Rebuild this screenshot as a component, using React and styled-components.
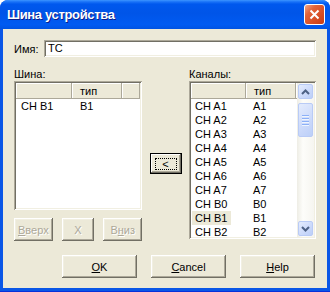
import React from 'react';
import styled, { createGlobalStyle } from 'styled-components';

// --- estilos ---

const GlobalStyle = createGlobalStyle`
  html, body { margin: 0; padding: 0; background: #ffffff; }
  body {
    font-family: "Liberation Sans", Arial, sans-serif;
    font-size: 11px;
    color: #000;
  }
`;

const Window = styled.div`
  width: 330px;
  height: 292px;
  box-sizing: border-box;
  display: flex;
  flex-direction: column;
  background: #0a56e6;
  border-radius: 8px 8px 0 0;
  border-bottom: 1px solid #0831d9;
  overflow: hidden;
`;

const TitleBar = styled.div`
  height: 29px;
  flex: none;
  display: flex;
  align-items: center;
  padding: 0 5px 0 7px;
  box-sizing: border-box;
  background: linear-gradient(180deg, #3d95ff 0%, #1b74f8 6%, #0058ee 14%, #0055e8 45%, #005bf2 85%, #0053e2 100%);
`;

const Title = styled.span`
  font-family: "Liberation Sans", Arial, sans-serif;
  font-weight: bold;
  font-size: 13px;
  color: #fff;
  text-shadow: 1px 1px #0f1f8a;
  letter-spacing: -0.35px;
`;

const CloseButton = styled.div`
  width: 21px;
  height: 21px;
  margin-left: auto;
  box-sizing: border-box;
  border: 1px solid #fff;
  border-radius: 3px;
  background: linear-gradient(135deg, #f4a888 0%, #e2643a 30%, #d64b22 70%, #c43c15 100%);
  display: flex;
  align-items: center;
  justify-content: center;
`;

const Body = styled.div`
  flex: 1;
  margin: 0 3px 3px;
  background: #ece9d8;
  padding: 11px 0 0 11px;
  display: flex;
  flex-direction: column;
`;

const FieldRow = styled.div`
  display: flex;
  align-items: center;
  height: 17px;
`;

const FieldLabel = styled.span`
  width: 30px;
`;

const sunken = `
  box-shadow: inset 1px 1px #aca899, inset -1px -1px #ffffff,
    inset 2px 2px #716f64, inset -2px -2px #f1efe2;
`;

const TextInput = styled.div`
  width: 272px;
  height: 17px;
  box-sizing: border-box;
  background: #fff;
  padding-left: 4px;
  line-height: 17px;
  ${sunken}
`;

const Panes = styled.div`
  display: grid;
  grid-template-columns: 128px 47px 127px;
  margin-top: 11px;
`;

const Column = styled.div`
  display: flex;
  flex-direction: column;
`;

const PaneLabel = styled.div`
  height: 13px;
  line-height: 13px;
`;

const ListBox = styled.div`
  height: ${(p) => p.$h}px;
  box-sizing: border-box;
  background: #fff;
  padding: 2px;
  display: flex;
  overflow: hidden;
  ${sunken}
`;

const ListContent = styled.div`
  flex: 1;
  min-width: 0;
  display: flex;
  flex-direction: column;
  overflow: hidden;
`;

const Header = styled.div`
  display: flex;
  height: 16px;
  flex: none;
`;

const HeaderCell = styled.div`
  width: ${(p) => (p.$w ? `${p.$w}px` : 'auto')};
  flex: ${(p) => (p.$w ? 'none' : '1')};
  box-sizing: border-box;
  background: #ece9d8;
  line-height: 16px;
  padding-left: 8px;
  box-shadow: inset -1px -1px #aca899, inset 1px 1px #ffffff;
`;

const Row = styled.div`
  display: flex;
  height: 14px;
  line-height: 14px;
  flex: none;
  white-space: nowrap;
`;

const Cell = styled.div`
  width: ${(p) => p.$w}px;
  flex: none;
  box-sizing: border-box;
  padding-left: ${(p) => p.$pad}px;
`;

const ItemName = styled.span`
  display: inline-block;
  width: 39px;
  box-sizing: border-box;
  padding-left: 3px;
  margin-left: 1px;
  background: ${(p) => (p.$selected ? '#ece9d8' : 'transparent')};
`;

const Scrollbar = styled.div`
  width: 17px;
  flex: none;
  display: flex;
  flex-direction: column;
  align-items: center;
  padding: 1px 0;
  box-sizing: border-box;
  background: linear-gradient(90deg, #eeede5 0%, #fdfdfa 35%, #f6f5f0 100%);
`;

const ScrollPart = styled.div`
  width: 15px;
  height: ${(p) => p.$h || 15}px;
  margin-top: ${(p) => p.$mt || 0}px;
  box-sizing: border-box;
  border: 1px solid #b9cbf6;
  border-radius: 2px;
  background: linear-gradient(135deg, #e4ecfd 0%, #cfdcfb 50%, #bccff8 100%);
  display: flex;
  flex-direction: column;
  align-items: center;
  justify-content: center;
  gap: 1px;
`;

const Grip = styled.div`
  width: 7px;
  height: 1px;
  background: #8cb0f8;
  box-shadow: 0 1px #eef4fe;
  margin-bottom: 1px;
`;

const Spacer = styled.div`
  flex: 1;
`;

const Middle = styled.div`
  display: flex;
  justify-content: center;
  padding-top: 85px;
`;

const ButtonRow = styled.div`
  display: flex;
  gap: ${(p) => p.$gap}px;
  margin-top: ${(p) => p.$mt}px;
  padding-left: ${(p) => p.$pl || 0}px;
`;

const Button = styled.div`
  width: ${(p) => p.$w}px;
  height: 23px;
  box-sizing: border-box;
  display: flex;
  align-items: center;
  justify-content: center;
  background: #ece9d8;
  color: ${(p) => (p.$disabled ? '#aca899' : '#000')};
  text-shadow: ${(p) => (p.$disabled ? '1px 1px #ffffff' : 'none')};
  box-shadow: inset -1px -1px #716f64, inset 1px 1px #ffffff,
    inset -2px -2px #aca899, inset 2px 2px #f1efe2;
`;

const DefaultButton = styled.div`
  width: 32px;
  height: 21px;
  box-sizing: border-box;
  display: flex;
  padding: 4px 4px 3px 4px;
  border: 1px solid #000;
  background: #ece9d8;
  box-shadow: inset -1px -1px #716f64, inset 1px 1px #ffffff,
    inset -2px -2px #aca899;
`;

const FocusRect = styled.div`
  flex: 1;
  border: 1px dotted #000;
  display: flex;
  align-items: center;
  justify-content: center;
  line-height: 1;
  font-size: 11px;
`;

// --- datos ---

const busItems = [{ name: 'CH B1', type: 'B1' }];

const channels = ['A1', 'A2', 'A3', 'A4', 'A5', 'A6', 'A7', 'B0', 'B1', 'B2'].map((c) => ({
  name: `CH ${c}`,
  type: c,
}));

const Chevron = ({ up }) => (
  <svg width="9" height="6" viewBox="0 0 9 6">
    <polyline
      points={up ? '1,5 4.5,1.5 8,5' : '1,1 4.5,4.5 8,1'}
      fill="none"
      stroke="#4d6185"
      strokeWidth="2"
    />
  </svg>
);

export default function App() {
  return (
    <>
      <GlobalStyle />
      <Window>
        <TitleBar>
          <Title>Шина устройства</Title>
          <CloseButton>
            <svg width="11" height="11" viewBox="0 0 11 11">
              <path d="M1.5 1.5 L9.5 9.5 M9.5 1.5 L1.5 9.5" stroke="#fff" strokeWidth="2" />
            </svg>
          </CloseButton>
        </TitleBar>
        <Body>
          <FieldRow>
            <FieldLabel>Имя:</FieldLabel>
            <TextInput>TC</TextInput>
          </FieldRow>

          <Panes>
            <Column>
              <PaneLabel>Шина:</PaneLabel>
              <ListBox $h={129}>
                <ListContent>
                  <Header>
                    <HeaderCell $w={56} />
                    <HeaderCell $w={50}>тип</HeaderCell>
                    <HeaderCell />
                  </Header>
                  {busItems.map((it) => (
                    <Row key={it.name}>
                      <Cell $w={56} $pad={1}>
                        <ItemName>{it.name}</ItemName>
                      </Cell>
                      <Cell $w={50} $pad={8}>{it.type}</Cell>
                    </Row>
                  ))}
                </ListContent>
              </ListBox>
              <ButtonRow $gap={9} $mt={8}>
                <Button $w={39} $disabled>
                  <span><u>В</u>верх</span>
                </Button>
                <Button $w={33} $disabled>X</Button>
                <Button $w={39} $disabled>
                  <span>В<u>н</u>из</span>
                </Button>
              </ButtonRow>
            </Column>

            <Middle>
              <DefaultButton>
                <FocusRect>&lt;</FocusRect>
              </DefaultButton>
            </Middle>

            <Column>
              <PaneLabel>Каналы:</PaneLabel>
              <ListBox $h={158}>
                <ListContent>
                  <Header>
                    <HeaderCell $w={55} />
                    <HeaderCell $w={50}>тип</HeaderCell>
                    <HeaderCell />
                  </Header>
                  {channels.map((it) => (
                    <Row key={it.name}>
                      <Cell $w={55} $pad={0}>
                        <ItemName $selected={it.type === 'B1'}>{it.name}</ItemName>
                      </Cell>
                      <Cell $w={50} $pad={7}>{it.type}</Cell>
                    </Row>
                  ))}
                </ListContent>
                <Scrollbar>
                  <ScrollPart>
                    <Chevron up />
                  </ScrollPart>
                  <ScrollPart $h={34} $mt={4}>
                    <Grip />
                    <Grip />
                    <Grip />
                    <Grip />
                  </ScrollPart>
                  <Spacer />
                  <ScrollPart>
                    <Chevron />
                  </ScrollPart>
                </Scrollbar>
              </ListBox>
            </Column>
          </Panes>

          <ButtonRow $gap={14} $mt={14} $pl={48}>
            <Button $w={75}>
              <span><u>O</u>K</span>
            </Button>
            <Button $w={75}>
              <span><u>C</u>ancel</span>
            </Button>
            <Button $w={75}>
              <span><u>H</u>elp</span>
            </Button>
          </ButtonRow>
        </Body>
      </Window>
    </>
  );
}
